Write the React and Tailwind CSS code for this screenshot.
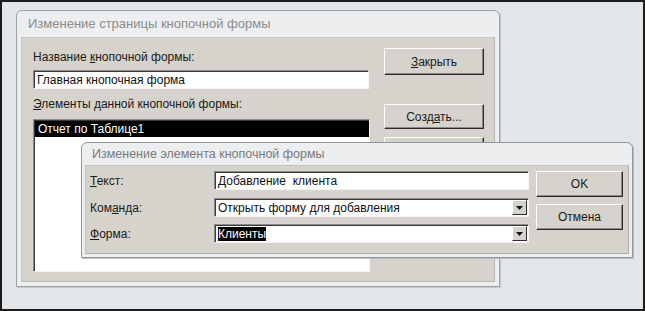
import React from "react";

const font = { fontFamily: '"Liberation Sans", Arial, sans-serif' };

function Btn({ children, className = "" }) {
  return (
    <div
      className={
        "flex items-center justify-center bg-[#d6d3cc] border border-t-white border-l-white border-r-[#2a2a2a] border-b-[#2a2a2a] shadow-[inset_-1px_-1px_0_#8a8a8a] text-[12px] text-[#1a1a1a] " +
        className
      }
    >
      {children}
    </div>
  );
}

function Field({ children, className = "", combo = false }) {
  return (
    <div
      className={
        "flex items-center bg-white border border-t-[#8a8a8a] border-l-[#8a8a8a] border-b-[#f4f4f4] border-r-[#f4f4f4] shadow-[inset_1px_1px_0_#3a3a3a] text-[12px] text-[#111] " +
        className
      }
    >
      <div className="flex-1 pl-[3px] whitespace-pre">{children}</div>
      {combo && (
        <div className="w-[15px] h-[15px] mr-[1px] flex items-center justify-center bg-[#d6d3cc] border border-t-white border-l-white border-r-[#2a2a2a] border-b-[#2a2a2a]">
          <svg width="7" height="4" viewBox="0 0 7 4">
            <path d="M0 0h7L3.5 4z" fill="#111" />
          </svg>
        </div>
      )}
    </div>
  );
}

export default function App() {
  return (
    <div
      style={font}
      className="relative w-[645px] h-[311px] bg-[#e3e6e9] border-2 border-[#1c1c1c] overflow-hidden"
    >
      {/* Dialog 1 */}
      <div className="ml-[14px] mt-[8px] w-[484px] h-[277px] flex flex-col bg-[#eceef0] border border-[#9da2a7] rounded-t-[6px] shadow-[1px_1px_0_#c4c8cc] px-[4px] pb-[4px]">
        <div className="h-[26px] flex items-center pl-[7px] text-[13px] text-[#8c8c8c]">
          Изменение страницы кнопочной формы
        </div>
        <div className="flex-1 flex bg-[#d6d3cc] border-r border-b border-[#b8b8b8] shadow-[inset_1px_1px_0_#c8c8c8]">
          <div className="flex flex-col pl-[12px] w-[362px]">
            <div className="mt-[13px] h-[14px] text-[12px] text-[#1a1a1a] leading-[14px]">
              Название <u>к</u>нопочной формы:
            </div>
            <Field className="mt-[6px] h-[19px] w-[336px]">Главная кнопочная форма</Field>
            <div className="mt-[8px] h-[14px] text-[12px] text-[#1a1a1a] leading-[14px]">
              <u>Э</u>лементы данной кнопочной формы:
            </div>
            <div className="mt-[8px] w-[337px] h-[153px] bg-white border border-t-[#8a8a8a] border-l-[#8a8a8a] border-b-[#f4f4f4] border-r-[#f4f4f4] shadow-[inset_1px_1px_0_#3a3a3a] pl-[1px] pt-[1px]">
              <div className="h-[16px] bg-black text-white text-[12px] leading-[16px] pl-[3px]">
                Отчет по Таблице1
              </div>
            </div>
          </div>
          <div className="flex flex-col pl-[1px]">
            <Btn className="mt-[11px] w-[100px] h-[27px]">
              <span><u>З</u>акрыть</span>
            </Btn>
            <Btn className="mt-[29px] w-[100px] h-[25px]">
              <span>Созд<u>а</u>ть...</span>
            </Btn>
            <Btn className="mt-[8px] w-[100px] h-[25px]">
              <span>Изменить...</span>
            </Btn>
          </div>
        </div>
      </div>

      {/* Dialog 2 */}
      <div className="absolute left-[79px] top-[140px] w-[552px] h-[116px] flex flex-col bg-[#eceef0] border border-[#8f959b] rounded-t-[6px] shadow-[1px_1px_0_#b9bdc1] px-[3px] pb-[3px]">
        <div className="h-[22px] flex items-center pl-[7px] text-[12.5px] text-[#7a7a7a]">
          Изменение элемента кнопочной формы
        </div>
        <div className="flex-1 flex bg-[#d6d3cc] border-r border-b border-[#b0b0b0] shadow-[inset_1px_1px_0_#c4c4c4]">
          <div className="flex flex-col pl-[5px] pt-[6px] w-[129px] text-[12px] text-[#1a1a1a]">
            <div className="h-[19px] flex items-center"><span><u>Т</u>екст:</span></div>
            <div className="h-[19px] mt-[8px] flex items-center"><span>Ком<u>а</u>нда:</span></div>
            <div className="h-[19px] mt-[7px] flex items-center"><span><u>Ф</u>орма:</span></div>
          </div>
          <div className="flex flex-col pt-[6px] w-[322px]">
            <Field className="h-[19px] w-[315px]">Добавление  клиента</Field>
            <Field combo className="h-[19px] w-[315px] mt-[8px]">Открыть форму для добавления</Field>
            <Field combo className="h-[19px] w-[315px] mt-[7px]">
              <span className="bg-black text-white">Клиенты</span>
            </Field>
          </div>
          <div className="flex flex-col pt-[6px]">
            <Btn className="w-[87px] h-[26px]">OK</Btn>
            <Btn className="w-[87px] h-[26px] mt-[7px]">Отмена</Btn>
          </div>
        </div>
      </div>
    </div>
  );
}
